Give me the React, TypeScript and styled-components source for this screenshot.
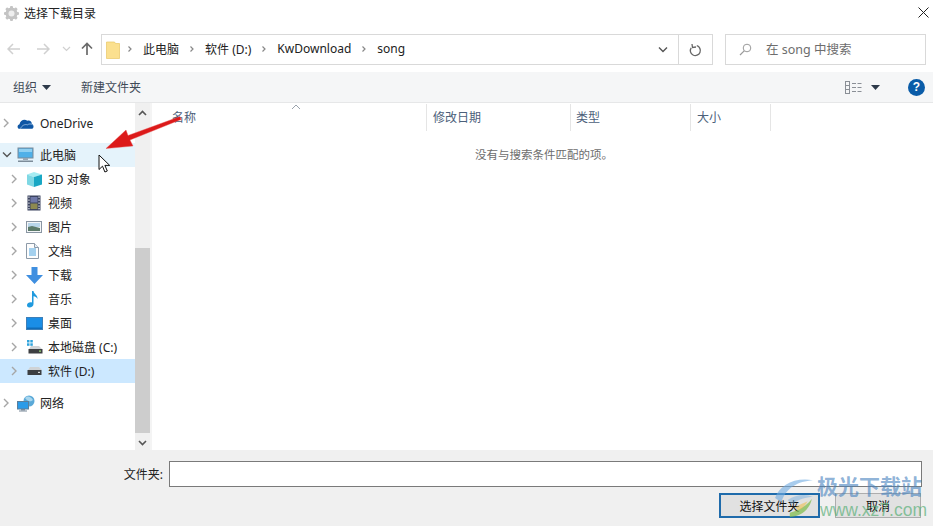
import React from "react";
import styled, { createGlobalStyle } from "styled-components";

const Global = createGlobalStyle`
  html, body { margin: 0; padding: 0; background: #fff; }
  body { font-family: "Noto Sans", "Noto Sans CJK SC", sans-serif; font-size: 12px; color: #1c1c1c; }
  * { box-sizing: border-box; }
`;

const Dialog = styled.div`
  position: relative;
  width: 933px;
  height: 526px;
  overflow: hidden;
  display: flex;
  flex-direction: column;
  background: #fff;
`;

const TitleBar = styled.div`
  height: 34px;
  flex: none;
  display: flex;
  align-items: flex-start;
  padding: 5px 1px 0 3px;
  gap: 4px;
`;
const TitleText = styled.div`
  font-size: 12px;
  line-height: 18px;
  color: #222;
  flex: 1;
`;
const CloseBtn = styled.div`
  width: 16px;
  height: 16px;
  display: flex;
`;

const NavBar = styled.div`
  height: 38px;
  flex: none;
  display: flex;
  align-items: flex-start;
  padding: 0 7px 0 0;
`;
const NavButtons = styled.div`
  width: 101px;
  height: 30px;
  flex: none;
  display: flex;
  align-items: center;
  padding-left: 7px;
`;
const NavBtn = styled.div<{ $w: number }>`
  width: ${(p) => p.$w}px;
  height: 30px;
  flex: none;
  display: flex;
  align-items: center;
`;
const Breadcrumb = styled.div`
  width: 612px;
  height: 31px;
  flex: none;
  border: 1px solid #d9d9d9;
  display: flex;
  align-items: center;
  padding-left: 4px;
`;
const Crumbs = styled.div`
  flex: 1;
  display: flex;
  align-items: center;
  gap: 8px;
  margin-left: 5px;
  padding-bottom: 2px;
  color: #222;
  font-size: 12px;
`;
const AddrChevron = styled.div`
  width: 30px;
  height: 100%;
  display: flex;
  align-items: center;
  justify-content: center;
  padding-right: 2px;
  border-right: 1px solid #d9d9d9;
`;
const Refresh = styled.div`
  width: 33px;
  height: 100%;
  display: flex;
  align-items: center;
  justify-content: center;
`;
const Search = styled.div`
  margin-left: 12px;
  flex: 1;
  height: 31px;
  border: 1px solid #d9d9d9;
  display: flex;
  align-items: center;
  padding: 0 0 0 13px;
  gap: 14px;
  color: #6d6d6d;
  font-size: 12.5px;
`;
const SearchText = styled.span`
  padding-bottom: 2px;
`;

const Toolbar = styled.div`
  height: 31px;
  flex: none;
  background: #f5f6f7;
  border-bottom: 1px solid #e6e7e8;
  display: flex;
  align-items: center;
  padding: 0 8px 0 13px;
  color: #3f4a57;
  font-size: 12px;
`;
const ToolItem = styled.div`
  display: flex;
  align-items: center;
  gap: 5px;
  margin-right: 30px;
`;
const Spacer = styled.div`
  flex: 1;
`;
const ViewBtn = styled.div`
  display: flex;
  align-items: center;
  gap: 9px;
  margin-right: 28px;
`;
const Help = styled.div`
  width: 17px;
  height: 17px;
  border-radius: 50%;
  background: #0a5ca8;
  color: #fff;
  font-weight: 700;
  font-size: 12px;
  line-height: 17px;
  text-align: center;
  font-family: "Liberation Sans", sans-serif;
`;

const Main = styled.div`
  height: 347px;
  flex: none;
  display: flex;
`;
const Tree = styled.div`
  width: 135px;
  flex: none;
  padding-top: 8px;
  display: flex;
  flex-direction: column;
`;
const Row = styled.div<{ $level: number; $bg?: string; $gap?: boolean }>`
  height: 24px;
  flex: none;
  display: flex;
  align-items: center;
  padding-left: ${(p) => (p.$level ? 10 : 2)}px;
  background: ${(p) => p.$bg || "transparent"};
  margin-top: ${(p) => (p.$gap ? 8 : 0)}px;
  color: #222;
  font-size: 12px;
  white-space: nowrap;
`;
const Expander = styled.div<{ $level: number }>`
  width: ${(p) => (p.$level ? 16 : 15)}px;
  flex: none;
  display: flex;
`;
const IconSlot = styled.div<{ $level: number }>`
  width: ${(p) => (p.$level ? 22 : 23)}px;
  height: 18px;
  flex: none;
  display: flex;
  align-items: center;
`;

const Scrollbar = styled.div`
  width: 15px;
  flex: none;
  background: #f0f0f0;
  display: flex;
  flex-direction: column;
`;
const ScrollArrow = styled.div`
  height: 17px;
  flex: none;
  padding-top: 2px;
  display: flex;
  align-items: center;
  justify-content: center;
`;
const ScrollTrack = styled.div`
  flex: 1;
  padding-top: 128px;
  display: flex;
`;
const ScrollThumb = styled.div`
  flex: 1;
  background: #cdcdcd;
`;
const PaneGap = styled.div`
  width: 2px;
  flex: none;
  background: #f4f4f4;
`;

const Files = styled.div`
  flex: 1;
  display: flex;
  flex-direction: column;
  position: relative;
`;
const HeaderRow = styled.div`
  height: 28px;
  flex: none;
  display: flex;
  padding-top: 1px;
  color: #4c607a;
  font-size: 12px;
  line-height: 27px;
`;
const HeaderCell = styled.div<{ $w: number; $pad: number }>`
  width: ${(p) => p.$w}px;
  flex: none;
  padding-left: ${(p) => p.$pad}px;
  border-right: 1px solid #e5e5e5;
`;
const SortCaret = styled.div`
  position: absolute;
  left: 139px;
  top: 1px;
  display: flex;
`;
const Empty = styled.div`
  text-align: center;
  color: #6d6d6d;
  font-size: 11.5px;
  line-height: 16px;
  margin-top: 16px;
  padding-left: 3px;
`;

const Footer = styled.div`
  flex: 1;
  background: #f0f0f0;
  padding: 11px 11px 0 0;
  display: flex;
  flex-direction: column;
  align-items: flex-end;
`;
const FieldRow = styled.div`
  display: flex;
  align-items: center;
  gap: 6px;
`;
const FieldLabel = styled.label`
  font-size: 12px;
  color: #222;
`;
const FieldInput = styled.div`
  width: 753px;
  height: 26px;
  background: #fff;
  border: 1px solid #7a7a7a;
`;
const Buttons = styled.div`
  display: flex;
  gap: 15px;
  margin-top: 6px;
  align-self: flex-end;
  margin-right: 1px;
`;
const Btn = styled.div<{ $primary?: boolean }>`
  height: 25px;
  width: ${(p) => (p.$primary ? 101 : 86)}px;
  background: #e1e1e1;
  border: ${(p) => (p.$primary ? "2px solid #1f6bab" : "1px solid #adadad")};
  display: flex;
  align-items: center;
  justify-content: center;
  font-size: 12px;
  color: #111;
`;

const Overlay = styled.div<{ $x: number; $y: number }>`
  position: absolute;
  left: ${(p) => p.$x}px;
  top: ${(p) => p.$y}px;
  pointer-events: none;
  display: flex;
`;
const Watermark = styled.div`
  position: absolute;
  left: 781px;
  top: 474px;
  width: 145px;
  height: 46px;
  pointer-events: none;
`;
const WmCn = styled.div`
  position: absolute;
  left: 36px;
  top: -1px;
  font-size: 21px;
  line-height: 26px;
  font-weight: 700;
  color: rgba(70, 130, 190, 0.62);
  white-space: nowrap;
`;
const WmEn = styled.div`
  position: absolute;
  left: 39px;
  top: 26px;
  font-family: "Liberation Sans", sans-serif;
  font-size: 17.5px;
  line-height: 20px;
  color: rgba(90, 175, 120, 0.7);
  white-space: nowrap;
`;
const WmLogo = styled.div`
  position: absolute;
  left: -9px;
  top: 3px;
  display: flex;
`;

const Chev = ({ c = "#a6a6a6" }: { c?: string }) => (
  <svg width="8" height="10" viewBox="0 0 8 10" fill="none">
    <path d="M2 1l4 4-4 4" stroke={c} strokeWidth="1.4" />
  </svg>
);
const ChevDown = () => (
  <svg width="10" height="8" viewBox="0 0 10 8" fill="none">
    <path d="M1 1.5l4 4 4-4" stroke="#555" strokeWidth="1.4" />
  </svg>
);
const CrumbChev = () => (
  <svg width="10" height="10" viewBox="0 0 10 10" fill="none">
    <path d="M3.5 2.5L6 5 3.5 7.5" stroke="#888" strokeWidth="1.2" />
  </svg>
);
const Caret = ({ c = "#2d3a4a" }: { c?: string }) => (
  <svg width="9" height="5" viewBox="0 0 9 5">
    <path d="M0 0h9L4.5 5z" fill={c} />
  </svg>
);

const Gear = () => (
  <svg width="17" height="17" viewBox="0 0 17 17">
    <g fill="#c4c4c4">
      <circle cx="8.5" cy="8.5" r="6" />
      {[0, 45, 90, 135].map((a) => (
        <rect key={a} x="7" y="1" width="3" height="15" rx="1" transform={`rotate(${a} 8.5 8.5)`} />
      ))}
    </g>
    <circle cx="8.5" cy="8.5" r="3" fill="#eee" />
  </svg>
);
const FolderIcon = () => (
  <svg width="14" height="18" viewBox="0 0 14 18">
    <path d="M0.5 1h8l1 1.5h4v15h-13z" fill="#fbe08f" stroke="#e8c766" strokeWidth="0.7" />
  </svg>
);
const Pc = () => (
  <svg width="18" height="16" viewBox="0 0 18 16">
    <rect x="1" y="1" width="15" height="10" fill="#4fb0e8" stroke="#7a8a99" />
    <rect x="2" y="2" width="13" height="3" fill="#8fd0f2" />
    <rect x="6" y="11" width="5" height="2" fill="#9aa7b3" />
    <rect x="1" y="13.5" width="15" height="1.5" fill="#7d8c99" />
  </svg>
);
const Cloud = () => (
  <svg width="17" height="11" viewBox="0 0 17 11">
    <path d="M2.500 10.800C.2 10.800-.3 7 2.500 6.200 3 2.500 7.500.3 10.300 2.800 12.800 1.800 15 3.700 14.800 6c2.400.6 2.300 4.800-.5 4.800z" fill="#0f57a5" />
    <path d="M3.500 10.500C5 7.500 7.500 6 10.500 6.800 12 5.700 14 5.600 15.500 6.800" stroke="#bcd6ef" strokeWidth="0.7" fill="none" />
  </svg>
);
const Cube = () => (
  <svg width="17" height="17" viewBox="0 0 17 17">
    <path d="M1 3.500L8 1l8 2.500L8 6z" fill="#a5ecf2" />
    <path d="M1 3.500L8 6v10l-7-2.500z" fill="#7fd8e4" />
    <path d="M8 6l8-2.500v10L8 16z" fill="#19a7c4" />
  </svg>
);
const Film = () => (
  <svg width="16" height="16" viewBox="0 0 16 16">
    <rect x="1.500" y="0.500" width="13" height="15" fill="#3c4460" />
    <rect x="4.500" y="2" width="7" height="5.500" fill="#6f78a8" />
    <rect x="4.500" y="8.500" width="7" height="5.500" fill="#8d8a50" />
    {[1.5, 4.5, 7.5, 10.5, 13].map((y) => (
      <g key={y} fill="#d8dbe2">
        <rect x="2.300" y={y} width="1.300" height="1.300" />
        <rect x="12.400" y={y} width="1.300" height="1.300" />
      </g>
    ))}
  </svg>
);
const Pic = () => (
  <svg width="16" height="12" viewBox="0 0 16 12">
    <rect x="0.500" y="0.500" width="15" height="11" fill="#f4f6f8" stroke="#8a96a3" />
    <rect x="2" y="2" width="12" height="4" fill="#b9d6ea" />
    <path d="M2 6l4-1 8 2v3H2z" fill="#5d7b6a" />
  </svg>
);
const Doc = () => (
  <svg width="13" height="16" viewBox="0 0 13 16" fill="none">
    <path d="M.5.500h8l4 4v11H.500z" fill="#fdfdfd" stroke="#8d9aa8" />
    <path d="M8.500.500v4h4" stroke="#8d9aa8" fill="#e6eef5" />
    <path d="M3 6h7M3 8h7M3 10h7M3 12h7" stroke="#4aa3df" />
  </svg>
);
const Down = () => (
  <svg width="17" height="17" viewBox="0 0 17 17">
    <path d="M5.500 0h6v8H17l-8.500 9L0 8h5.500z" fill="#3f8fe0" />
  </svg>
);
const Music = () => (
  <svg width="14" height="17" viewBox="0 0 14 17">
    <path d="M6 0h1.500c.3 3 4.500 4 4 8-.5-1.500-2-2.500-4-2.800V13c0 2.200-2 3.500-4 3.500S1 15.300 1 14c0-1.800 2.500-3.200 5-2.500z" fill="#1f9ade" />
  </svg>
);
const Desktop = () => (
  <svg width="17" height="13" viewBox="0 0 17 13">
    <rect x="0.500" y="0.500" width="16" height="12" fill="#1a8ee6" stroke="#3d7fb8" />
    <rect x="1" y="10.500" width="15" height="1.500" fill="#0f6cb8" />
  </svg>
);
const DiskC = () => (
  <svg width="17" height="16" viewBox="0 0 17 16">
    <rect x="1" y="1" width="2.500" height="2.500" fill="#2fa3dc" />
    <rect x="4.300" y="1" width="2.500" height="2.500" fill="#2fa3dc" />
    <rect x="1" y="4.300" width="2.500" height="2.500" fill="#2fa3dc" />
    <rect x="4.300" y="4.300" width="2.500" height="2.500" fill="#2fa3dc" />
    <path d="M3 10l2-3h8l3 3z" fill="#cfd3d6" />
    <rect x="2.500" y="10" width="14" height="4.500" fill="#3d3f42" />
    <rect x="13" y="11.500" width="2" height="1.200" fill="#9ce07a" />
  </svg>
);
const DiskD = () => (
  <svg width="17" height="10" viewBox="0 0 17 10">
    <path d="M2 4l2-3h9l3 3z" fill="#cfd3d6" />
    <rect x="1.500" y="4" width="14" height="5" fill="#3d3f42" />
    <rect x="12" y="5.800" width="2" height="1.200" fill="#d8d8d8" />
  </svg>
);
const Net = () => (
  <svg width="18" height="17" viewBox="0 0 18 17">
    <circle cx="12" cy="6" r="5.500" fill="#5aa9d8" />
    <path d="M8 3c3-3 6-1 8 2-2 2-5 2-8-2z" fill="#a8d6ee" />
    <rect x="0.500" y="6.500" width="11" height="7.500" fill="#2b9be8" stroke="#5b7f9c" />
    <rect x="4" y="14" width="4" height="1.500" fill="#7a8a99" />
    <rect x="2" y="15.500" width="8" height="1" fill="#7a8a99" />
  </svg>
);

type Item = { label: string; icon: React.ReactNode; level: number; bg?: string; gap?: boolean; open?: boolean };
const items: Item[] = [
  { label: "OneDrive", icon: <Cloud />, level: 0 },
  { label: "此电脑", icon: <Pc />, level: 0, bg: "#e5f3fb", gap: true, open: true },
  { label: "3D 对象", icon: <Cube />, level: 1 },
  { label: "视频", icon: <Film />, level: 1 },
  { label: "图片", icon: <Pic />, level: 1 },
  { label: "文档", icon: <Doc />, level: 1 },
  { label: "下载", icon: <Down />, level: 1 },
  { label: "音乐", icon: <Music />, level: 1 },
  { label: "桌面", icon: <Desktop />, level: 1 },
  { label: "本地磁盘 (C:)", icon: <DiskC />, level: 1 },
  { label: "软件 (D:)", icon: <DiskD />, level: 1, bg: "#cce8ff" },
  { label: "网络", icon: <Net />, level: 0, gap: true },
];

export default function App() {
  return (
    <Dialog>
      <Global />
      <TitleBar>
        <Gear />
        <TitleText>选择下载目录</TitleText>
        <CloseBtn>
          <svg width="16" height="16" viewBox="0 0 16 16">
            <path d="M2.500 2.500l10 10M12.500 2.500l-10 10" stroke="#222" strokeWidth="1" />
          </svg>
        </CloseBtn>
      </TitleBar>
      <NavBar>
        <NavButtons>
          <NavBtn $w={29}>
            <svg width="14" height="12" viewBox="0 0 14 12" fill="none">
              <path d="M1 6h12M6 1L1 6l5 5" stroke="#d0d0d0" strokeWidth="1.500" />
            </svg>
          </NavBtn>
          <NavBtn $w={26}>
            <svg width="14" height="12" viewBox="0 0 14 12" fill="none">
              <path d="M1 6h12M8 1l5 5-5 5" stroke="#d0d0d0" strokeWidth="1.500" />
            </svg>
          </NavBtn>
          <NavBtn $w={19}>
            <svg width="9" height="6" viewBox="0 0 9 6" fill="none">
              <path d="M1 1l3.500 3.500L8 1" stroke="#d0d0d0" strokeWidth="1.200" />
            </svg>
          </NavBtn>
          <NavBtn $w={14}>
            <svg width="12" height="14" viewBox="0 0 12 14" fill="none">
              <path d="M6 13V1.500M1 6.500l5-5 5 5" stroke="#6a6a6a" strokeWidth="1.700" />
            </svg>
          </NavBtn>
        </NavButtons>
        <Breadcrumb>
          <FolderIcon />
          <Crumbs>
            <CrumbChev />
            <span>此电脑</span>
            <CrumbChev />
            <span>软件 (D:)</span>
            <CrumbChev />
            <span>KwDownload</span>
            <CrumbChev />
            <span>song</span>
          </Crumbs>
          <AddrChevron>
            <ChevDown />
          </AddrChevron>
          <Refresh>
            <svg width="13" height="14" viewBox="0 0 13 14" fill="none">
              <path d="M3.500 3.500a5 5 0 1 0 6 0" stroke="#666" strokeWidth="1.300" transform="rotate(-20 6.500 8)" />
              <path d="M3 1l.5 3.500L7 4" stroke="#666" strokeWidth="1.300" />
            </svg>
          </Refresh>
        </Breadcrumb>
        <Search>
          <svg width="13" height="13" viewBox="0 0 13 13" fill="none">
            <circle cx="8" cy="5" r="3.800" stroke="#9a9a9a" />
            <path d="M5.200 7.800L1 12" stroke="#9a9a9a" strokeWidth="1.200" />
          </svg>
          <SearchText>在 song 中搜索</SearchText>
        </Search>
      </NavBar>
      <Toolbar>
        <ToolItem>
          组织
          <Caret />
        </ToolItem>
        <ToolItem>新建文件夹</ToolItem>
        <Spacer />
        <ViewBtn>
          <svg width="17" height="13" viewBox="0 0 17 13" fill="none">
            <rect x="0.500" y="0.500" width="4" height="12" stroke="#8a8f96" />
            <path d="M0.500 4.500h4M0.500 8.500h4M7 2.500h4M12.500 2.500h4M7 6.500h4M12.500 6.500h4M7 10.500h4M12.500 10.500h4" stroke="#8a8f96" />
          </svg>
          <Caret />
        </ViewBtn>
        <Help>?</Help>
      </Toolbar>
      <Main>
        <Tree>
          {items.map((it) => (
            <Row key={it.label} $level={it.level} $bg={it.bg} $gap={it.gap}>
              <Expander $level={it.level}>{it.open ? <ChevDown /> : <Chev />}</Expander>
              <IconSlot $level={it.level}>{it.icon}</IconSlot>
              {it.label}
            </Row>
          ))}
        </Tree>
        <Scrollbar>
          <ScrollArrow>
            <svg width="9" height="6" viewBox="0 0 9 6" fill="none">
              <path d="M1 5l3.500-3.500L8 5" stroke="#555" strokeWidth="1.600" />
            </svg>
          </ScrollArrow>
          <ScrollTrack>
            <ScrollThumb />
          </ScrollTrack>
          <ScrollArrow>
            <svg width="9" height="6" viewBox="0 0 9 6" fill="none">
              <path d="M1 1l3.500 3.500L8 1" stroke="#555" strokeWidth="1.600" />
            </svg>
          </ScrollArrow>
        </Scrollbar>
        <PaneGap />
        <Files>
          <HeaderRow>
            <HeaderCell $w={275} $pad={20}>名称</HeaderCell>
            <HeaderCell $w={144} $pad={6}>修改日期</HeaderCell>
            <HeaderCell $w={120} $pad={5}>类型</HeaderCell>
            <HeaderCell $w={80} $pad={6}>大小</HeaderCell>
          </HeaderRow>
          <SortCaret>
            <svg width="10" height="6" viewBox="0 0 10 6" fill="none">
              <path d="M1 5l4-4 4 4" stroke="#9aa3ad" />
            </svg>
          </SortCaret>
          <Empty>没有与搜索条件匹配的项。</Empty>
        </Files>
      </Main>
      <Footer>
        <FieldRow>
          <FieldLabel>文件夹:</FieldLabel>
          <FieldInput />
        </FieldRow>
        <Buttons>
          <Btn $primary>选择文件夹</Btn>
          <Btn>取消</Btn>
        </Buttons>
      </Footer>
      <Overlay $x={104} $y={115}>
        <svg width="78" height="36" viewBox="0 0 78 36">
          <path d="M76 1.500L77 4.500 26 25 29 31 2 33.500 22 15 24 20.500z" fill="#dc1a1a" stroke="#e85050" strokeWidth="0.400" />
        </svg>
      </Overlay>
      <Overlay $x={98} $y={154}>
        <svg width="13" height="20" viewBox="0 0 13 20">
          <path d="M1 1v14.500l3.500-3.300 2.400 5.800 2.400-1-2.400-5.600h4.800z" fill="#fff" stroke="#111" strokeWidth="1" />
        </svg>
      </Overlay>
      <Watermark>
        <WmLogo>
          <svg width="44" height="42" viewBox="0 0 40 40">
            <path d="M2 20C6 8 20 0 38 3 24 4 12 10 8 24z" fill="rgba(110,170,225,0.6)" />
            <path d="M14 22c8-6 18-6 24-3-6 0-14 2-20 7z" fill="rgba(110,170,225,0.45)" />
            <path d="M16 38c10 0 19-7 21-17-5 6-12 11-21 13z" fill="rgba(130,190,80,0.75)" />
            <path d="M24 32c4-2 7-5 9-9-4 2-8 3-12 6z" fill="rgba(240,190,70,0.55)" />
          </svg>
        </WmLogo>
        <WmCn>极光下载站</WmCn>
        <WmEn>www.xz7.com</WmEn>
      </Watermark>
    </Dialog>
  );
}
